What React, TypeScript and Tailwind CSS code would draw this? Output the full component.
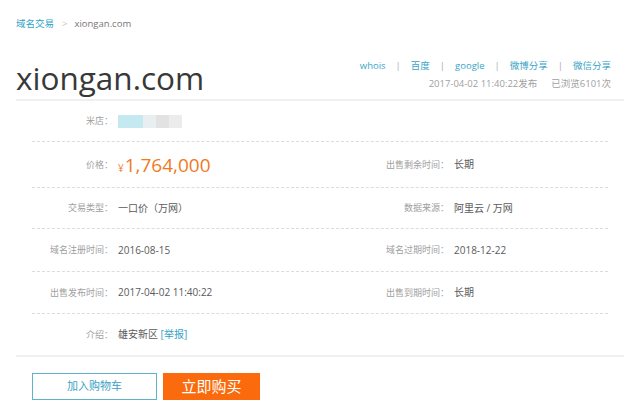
import React from "react";

const Row = ({
  h,
  last,
  children,
}: {
  h: string;
  last?: boolean;
  children: React.ReactNode;
}) => (
  <div
    className={`flex items-center ${h} ${last ? "" : "border-b border-dashed border-[#dcdcdc]"}`}
  >
    {children}
  </div>
);

const Cell = ({
  label,
  labelW,
  children,
}: {
  label: string;
  labelW: string;
  children: React.ReactNode;
}) => (
  <div className="flex w-[288px] items-center">
    <div className={`${labelW} shrink-0 text-right text-[9px] text-[#a0a0a0]`}>{label}：</div>
    <div className="ml-[5px] text-[10px] text-[#5a5a5a]">{children}</div>
  </div>
);

export default function App() {
  return (
    <div className="w-[640px] h-[414px] bg-white font-['Open_Sans','Noto_Sans_CJK_SC',sans-serif] overflow-hidden">
      <div className="flex items-center pl-[16px] pt-[18px] text-[9.5px] leading-[12px]">
        <span className="text-[#2fa3c7]">域名交易</span>
        <span className="ml-[8px] text-[#c4c4c4]">&gt;</span>
        <span className="ml-[7px] text-[#777]">xiongan.com</span>
      </div>
      <div className="flex h-[69px] justify-between pl-[16px] pr-[29px]">
        <div className="mt-[28px] text-[31.5px] leading-[40px] text-[#383838]">xiongan.com</div>
        <div className="mt-[27px] flex flex-col items-end text-[9.5px] leading-[18px]">
          <div className="flex items-center text-[#3aa6c9]">
            <span>whois</span>
            <span className="mx-[10px] text-[#aaa]">|</span>
            <span>百度</span>
            <span className="mx-[10px] text-[#aaa]">|</span>
            <span>google</span>
            <span className="mx-[10px] text-[#aaa]">|</span>
            <span>微博分享</span>
            <span className="mx-[10px] text-[#aaa]">|</span>
            <span>微信分享</span>
          </div>
          <div className="flex items-center text-[#a0a0a0]">
            <span>2017-04-02 11:40:22发布</span>
            <span className="ml-[14px]">已浏览6101次</span>
          </div>
        </div>
      </div>
      <div className="ml-[16px] h-[2px] w-[608px] bg-[#f0f0f0]" />
      <div className="ml-[32px] w-[576px]">
        <Row h="h-[41px]">
          <Cell label="米店" labelW="w-[81px]">
            <div className="flex h-[13px] w-[64px]">
              <div className="w-[25px] bg-[#c4e9f1]" />
              <div className="w-[13px] bg-[#e9eef0]" />
              <div className="w-[13px] bg-[#e2e2e2]" />
              <div className="w-[13px] bg-[#ececec]" />
            </div>
          </Cell>
        </Row>
        <Row h="h-[46px]">
          <Cell label="价格" labelW="w-[81px]">
            <span className="flex items-baseline text-[#f07a1e]">
              <span className="text-[10px]">¥</span>
              <span className="ml-[1px] text-[19px] leading-[24px]">1,764,000</span>
            </span>
          </Cell>
          <Cell label="出售剩余时间" labelW="w-[129px]">长期</Cell>
        </Row>
        <Row h="h-[41px]">
          <Cell label="交易类型" labelW="w-[81px]">一口价（万网）</Cell>
          <Cell label="数据来源" labelW="w-[129px]">阿里云 / 万网</Cell>
        </Row>
        <Row h="h-[43px]">
          <Cell label="域名注册时间" labelW="w-[81px]">2016-08-15</Cell>
          <Cell label="域名过期时间" labelW="w-[129px]">2018-12-22</Cell>
        </Row>
        <Row h="h-[42px]">
          <Cell label="出售发布时间" labelW="w-[81px]">2017-04-02 11:40:22</Cell>
          <Cell label="出售到期时间" labelW="w-[129px]">长期</Cell>
        </Row>
        <Row h="h-[41px]" last>
          <Cell label="介绍" labelW="w-[81px]">
            雄安新区 <span className="text-[#2fa3c7]">[举报]</span>
          </Cell>
        </Row>
      </div>
      <div className="ml-[16px] h-[2px] w-[608px] bg-[#efefef]" />
      <div className="ml-[32px] mt-[16px] flex gap-[6px]">
        <button className="flex h-[27px] w-[125px] items-center justify-center border border-[#5eb2cc] bg-white text-[11px] text-[#3aa2c4]">
          加入购物车
        </button>
        <button className="flex h-[27px] w-[97px] items-center justify-center bg-[#fb6a0c] text-[15px] text-white">
          立即购买
        </button>
      </div>
    </div>
  );
}
